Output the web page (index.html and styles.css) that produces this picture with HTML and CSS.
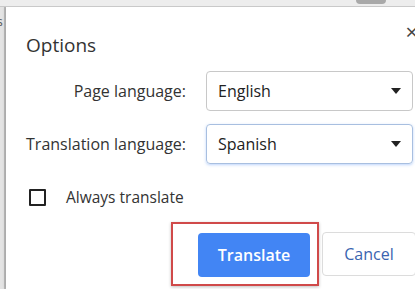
FILE: index.html
```html
<!doctype html>
<html lang="en">
  <head>
    <title>Translate options</title>
    <link rel="stylesheet" href="styles.css">
  </head>
  <body>
    <div class="topbar"><span class="tab-blob"></span></div>
    <div class="frame">
      <div class="sidebar"><span class="side-glyph">s</span></div>
      <div class="dialog">
        <div class="dialog-head">
          <h1 class="title">Options</h1>
          <span class="close">&times;</span>
        </div>

        <div class="form">
          <label class="label">Page language:</label>
          <div class="select">
            <span>English</span>
            <svg class="caret" width="10" height="6" viewBox="0 0 10 6"><path d="M0 0h10L5 6z" fill="#222"/></svg>
          </div>

          <label class="label">Translation language:</label>
          <div class="select focused">
            <span>Spanish</span>
            <svg class="caret" width="10" height="6" viewBox="0 0 10 6"><path d="M0 0h10L5 6z" fill="#222"/></svg>
          </div>
        </div>

        <div class="check-row">
          <span class="checkbox"></span>
          <span>Always translate</span>
        </div>

        <div class="actions">
          <span class="highlight">
            <button class="btn btn-primary">Translate</button>
          </span>
          <button class="btn btn-cancel">Cancel</button>
        </div>
      </div>
    </div>
  </body>
</html>
```

FILE: styles.css
```css
html, body {
  margin: 0;
  height: 100%;
  overflow: hidden;
}

body {
  font-family: "Open Sans", "Noto Sans", sans-serif;
  color: #222;
  background: #fff;
}

.topbar {
  position: relative;
  height: 6px;
  background: #ededed;
  border-bottom: 1px solid #c9c9c9;
}

.tab-blob {
  position: absolute;
  left: 356px;
  top: -4px;
  width: 30px;
  height: 8px;
  border-radius: 4px;
  background: #a9a9a9;
}

.frame {
  display: flex;
  height: calc(100% - 7px);
}

.sidebar {
  width: 4px;
  flex-shrink: 0;
  background: #e4e4e4;
  border-right: 2px solid #bdbdbd;
  overflow: hidden;
}

.side-glyph {
  display: block;
  margin: 6px 0 0 -3px;
  font-size: 12px;
  color: #555;
}

.dialog {
  width: 450px;
  flex-shrink: 0;
  padding: 17px 0 0 20px;
  background: #fff;
  box-shadow: -1px 0 3px rgba(0, 0, 0, 0.15);
}

.dialog-head {
  display: flex;
  justify-content: space-between;
  width: 392px;
}

.title {
  margin: 8px 0 0;
  font-size: 19px;
  font-weight: 400;
  color: #333;
}

.close {
  margin-top: -4px;
  font-size: 22px;
  line-height: 1;
  color: #444;
}

.form {
  display: grid;
  grid-template-columns: 160px 207px;
  column-gap: 20px;
  row-gap: 13px;
  align-items: center;
  margin-top: 13px;
}

.label {
  text-align: right;
  font-size: 16px;
  color: #333;
}

.select {
  display: flex;
  align-items: center;
  justify-content: space-between;
  height: 40px;
  box-sizing: border-box;
  padding: 0 11px 0 11px;
  border: 1px solid #c8c8c8;
  border-radius: 4px;
  font-size: 16px;
  color: #222;
}

.select.focused {
  border-color: #a8bfe0;
  box-shadow: 0 1px 3px rgba(66, 133, 244, 0.35);
}

.check-row {
  display: flex;
  align-items: center;
  gap: 20px;
  margin: 22px 0 0 3px;
  font-size: 15.5px;
  color: #333;
}

.checkbox {
  width: 13px;
  height: 13px;
  border: 2px solid #222;
  border-radius: 1px;
}

.actions {
  display: flex;
  align-items: center;
  margin: 14px 0 0 145px;
}

.highlight {
  display: inline-flex;
  padding: 9px 7px 7px 25px;
  border: 2px solid #d04a4a;
  box-shadow: 0 1px 3px rgba(0, 0, 0, 0.25);
}

.btn {
  height: 44px;
  border-radius: 4px;
  font-family: inherit;
  font-size: 16px;
  cursor: pointer;
}

.btn-primary {
  width: 112px;
  border: none;
  background: #4285f4;
  color: #fff;
  font-weight: 600;
}

.btn-cancel {
  width: 94px;
  margin-left: 3px;
  border: 1px solid #dcdcdc;
  background: #fff;
  color: #3a64b0;
}
```
